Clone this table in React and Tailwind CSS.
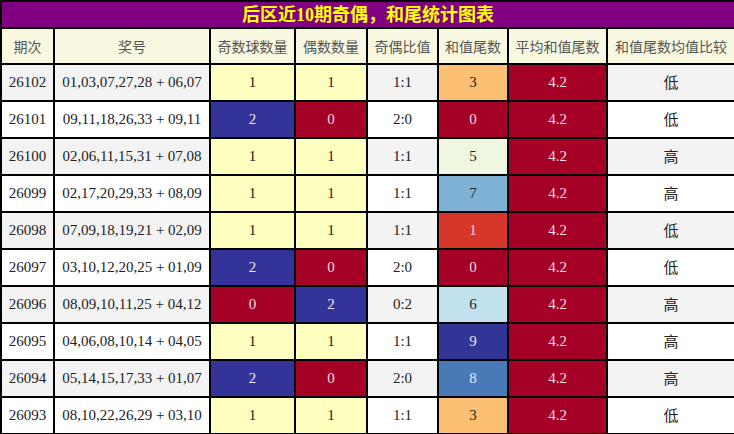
import React from 'react';

const C = {
  y: 'bg-[#ffffc0] text-[#222]',
  b: 'bg-[#333399] text-[#e8e8f0]',
  r: 'bg-[#a50026] text-[#f0dfe2]',
};

const tailColor = {
  3: 'bg-[#fdbf71] text-[#222]',
  0: 'bg-[#a50026] text-[#f0dfe2]',
  5: 'bg-[#eff7e1] text-[#222]',
  7: 'bg-[#7fb3d5] text-[#222]',
  1: 'bg-[#d7362b] text-[#f5dcd8]',
  6: 'bg-[#c1e2ed] text-[#222]',
  9: 'bg-[#333596] text-[#e8e8f0]',
  8: 'bg-[#4a79b8] text-[#e8edf5]',
};

const rows = [
  ['26102', '01,03,07,27,28 + 06,07', 1, 1, '1:1', 3, '低'],
  ['26101', '09,11,18,26,33 + 09,11', 2, 0, '2:0', 0, '低'],
  ['26100', '02,06,11,15,31 + 07,08', 1, 1, '1:1', 5, '高'],
  ['26099', '02,17,20,29,33 + 08,09', 1, 1, '1:1', 7, '高'],
  ['26098', '07,09,18,19,21 + 02,09', 1, 1, '1:1', 1, '低'],
  ['26097', '03,10,12,20,25 + 01,09', 2, 0, '2:0', 0, '低'],
  ['26096', '08,09,10,11,25 + 04,12', 0, 2, '0:2', 6, '高'],
  ['26095', '04,06,08,10,14 + 04,05', 1, 1, '1:1', 9, '高'],
  ['26094', '05,14,15,17,33 + 01,07', 2, 0, '2:0', 8, '高'],
  ['26093', '08,10,22,26,29 + 03,10', 1, 1, '1:1', 3, '低'],
];

const countColor = (n) => (n === 1 ? C.y : n === 2 ? C.b : C.r);

const headers = ['期次', '奖号', '奇数球数量', '偶数数量', '奇偶比值', '和值尾数', '平均和值尾数', '和值尾数均值比较'];

export default function App() {
  const cell = 'border-2 border-black text-center p-0';
  return (
    <div className="w-[734px] h-[434px] bg-white" style={{ fontFamily: '"Liberation Serif", "Noto Sans CJK SC", serif' }}>
      <table className="w-[734px] table-fixed border-collapse text-[15px]">
        <colgroup>
          <col className="w-[53px]" />
          <col className="w-[156px]" />
          <col className="w-[85px]" />
          <col className="w-[72px]" />
          <col className="w-[71px]" />
          <col className="w-[70px]" />
          <col className="w-[99px]" />
          <col className="w-[128px]" />
        </colgroup>
        <thead>
          <tr className="h-[27px]">
            <th colSpan={8} className={`${cell} bg-[#800080] text-[#ffff00] text-[18px] font-bold leading-none`}>
              后区近10期奇偶，和尾统计图表
            </th>
          </tr>
          <tr className="h-[36px]">
            {headers.map((h) => (
              <th key={h} className={`${cell} bg-[#f8f8e1] text-[#555] text-[14px] font-normal`} style={{ fontFamily: '"Noto Sans CJK SC", sans-serif' }}>
                {h}
              </th>
            ))}
          </tr>
        </thead>
        <tbody>
          {rows.map((r, i) => {
            const alt = i % 2 === 0 ? 'bg-[#f3f3f3]' : 'bg-white';
            return (
              <tr key={r[0]} className="h-[37px]">
                <td className={`${cell} ${alt} text-[#222]`}>{r[0]}</td>
                <td className={`${cell} ${alt} text-[#222]`}>{r[1]}</td>
                <td className={`${cell} ${countColor(r[2])}`}>{r[2]}</td>
                <td className={`${cell} ${countColor(r[3])}`}>{r[3]}</td>
                <td className={`${cell} ${alt} text-[#222]`}>{r[4]}</td>
                <td className={`${cell} ${tailColor[r[5]]}`}>{r[5]}</td>
                <td className={`${cell} bg-[#a50026] text-[#f0dfe2]`}>4.2</td>
                <td className={`${cell} ${alt} text-[#222]`} style={{ fontFamily: '"Noto Sans CJK SC", sans-serif' }}>{r[6]}</td>
              </tr>
            );
          })}
        </tbody>
      </table>
    </div>
  );
}
